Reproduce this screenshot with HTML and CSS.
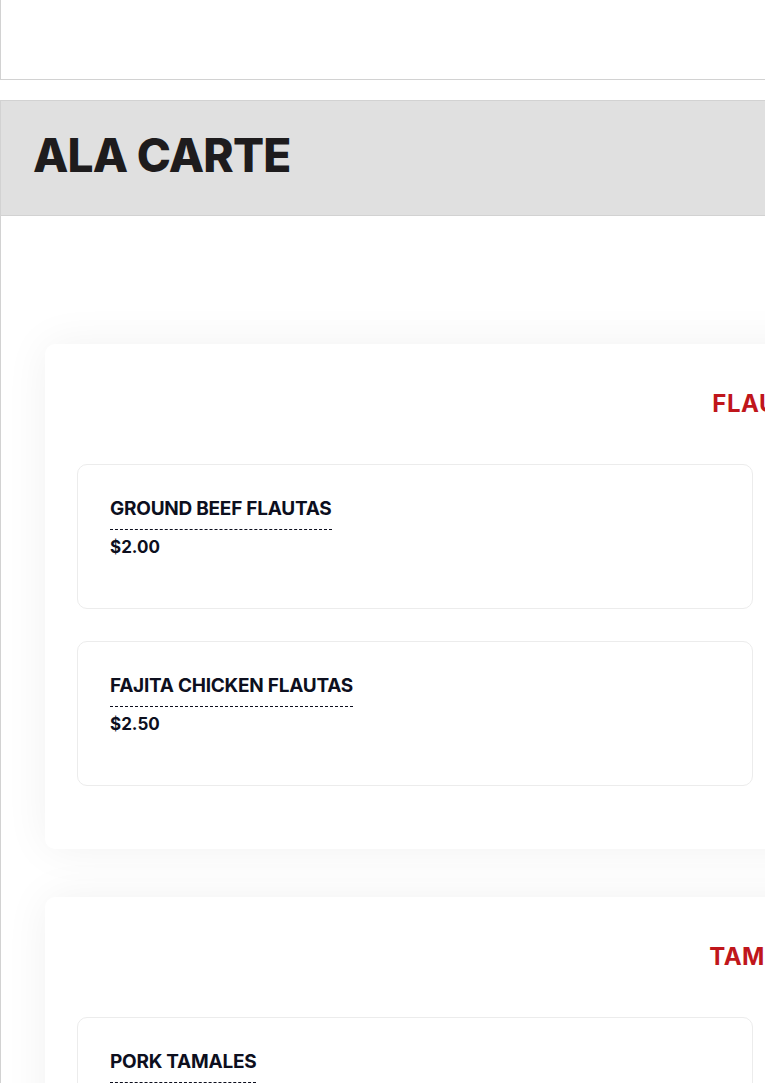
FILE: index.html
```html
<!DOCTYPE html>
<html lang="en">
<head>
<meta charset="utf-8">
<title>Ala Carte</title>
<link rel="stylesheet" href="styles.css">
</head>
<body>
<div class="page">
  <header class="topbar"></header>
  <section class="menu">
    <div class="band">
      <h1 class="band-title">ALA CARTE</h1>
    </div>
    <div class="menu-body">
      <article class="category">
        <h2 class="category-title">FLAUTAS</h2>
        <div class="columns">
          <div class="column">
            <div class="item">
              <h3 class="item-name">GROUND BEEF FLAUTAS</h3>
              <div class="item-price">$2.00</div>
            </div>
            <div class="item">
              <h3 class="item-name">FAJITA CHICKEN FLAUTAS</h3>
              <div class="item-price">$2.50</div>
            </div>
          </div>
          <div class="column"></div>
        </div>
      </article>
      <article class="category">
        <h2 class="category-title">TAMALES</h2>
        <div class="columns">
          <div class="column">
            <div class="item">
              <h3 class="item-name">PORK TAMALES</h3>
              <div class="item-price">$2.00</div>
            </div>
          </div>
          <div class="column"></div>
        </div>
      </article>
    </div>
  </section>
</div>
</body>
</html>
```
FILE: styles.css
```css
html, body {
  margin: 0;
  padding: 0;
  overflow: hidden;
  background: #ffffff;
}
body {
  font-family: "Inter", "Noto Sans", sans-serif;
  color: #0d0f1e;
}
.page {
  width: 1540px;
}
.topbar {
  height: 79px;
  border-left: 1px solid #d2d2d2;
  border-right: 1px solid #d2d2d2;
  border-bottom: 1px solid #d2d2d2;
}
.menu {
  margin-top: 20px;
  border: 1px solid #d2d2d2;
  border-bottom: none;
}
.band {
  height: 114px;
  background: #e0e0e0;
  border-bottom: 1px solid #d2d2d2;
  display: flex;
  align-items: center;
  padding-left: 32px;
}
.band-title {
  margin: 0;
  font-size: 46px;
  font-weight: 800;
  letter-spacing: -0.8px;
  color: #1e1c1d;
  line-height: 1;
  padding-bottom: 7px;
}
.menu-body {
  padding: 128px 44px 40px;
  display: flex;
  flex-direction: column;
  gap: 48px;
}
.category {
  width: 1448px;
  box-sizing: border-box;
  background: #fff;
  border-radius: 10px;
  box-shadow: 0 0 45px rgba(0, 0, 0, 0.06);
  padding: 42px 32px 63px;
}
.category-title {
  margin: 0 0 42px;
  text-align: center;
  font-size: 24px;
  line-height: 36px;
  font-weight: 700;
  letter-spacing: 0.5px;
  color: #c0161b;
}
.columns {
  display: grid;
  grid-template-columns: 676px 676px;
  gap: 32px;
}
.column {
  display: flex;
  flex-direction: column;
  gap: 32px;
}
.item {
  box-sizing: border-box;
  height: 145px;
  border: 1px solid #ececec;
  border-radius: 10px;
  padding: 29px 32px 20px;
}
.item-name {
  display: inline-block;
  margin: 0;
  font-size: 19px;
  line-height: 30px;
  font-weight: 700;
  letter-spacing: -0.25px;
  color: #0d0f1e;
  padding-bottom: 5px;
  border-bottom: 1px dashed #0d0f1e;
}
.item-price {
  margin-top: 5px;
  font-size: 17px;
  line-height: 24px;
  font-weight: 700;
  color: #0d0f1e;
}
```
